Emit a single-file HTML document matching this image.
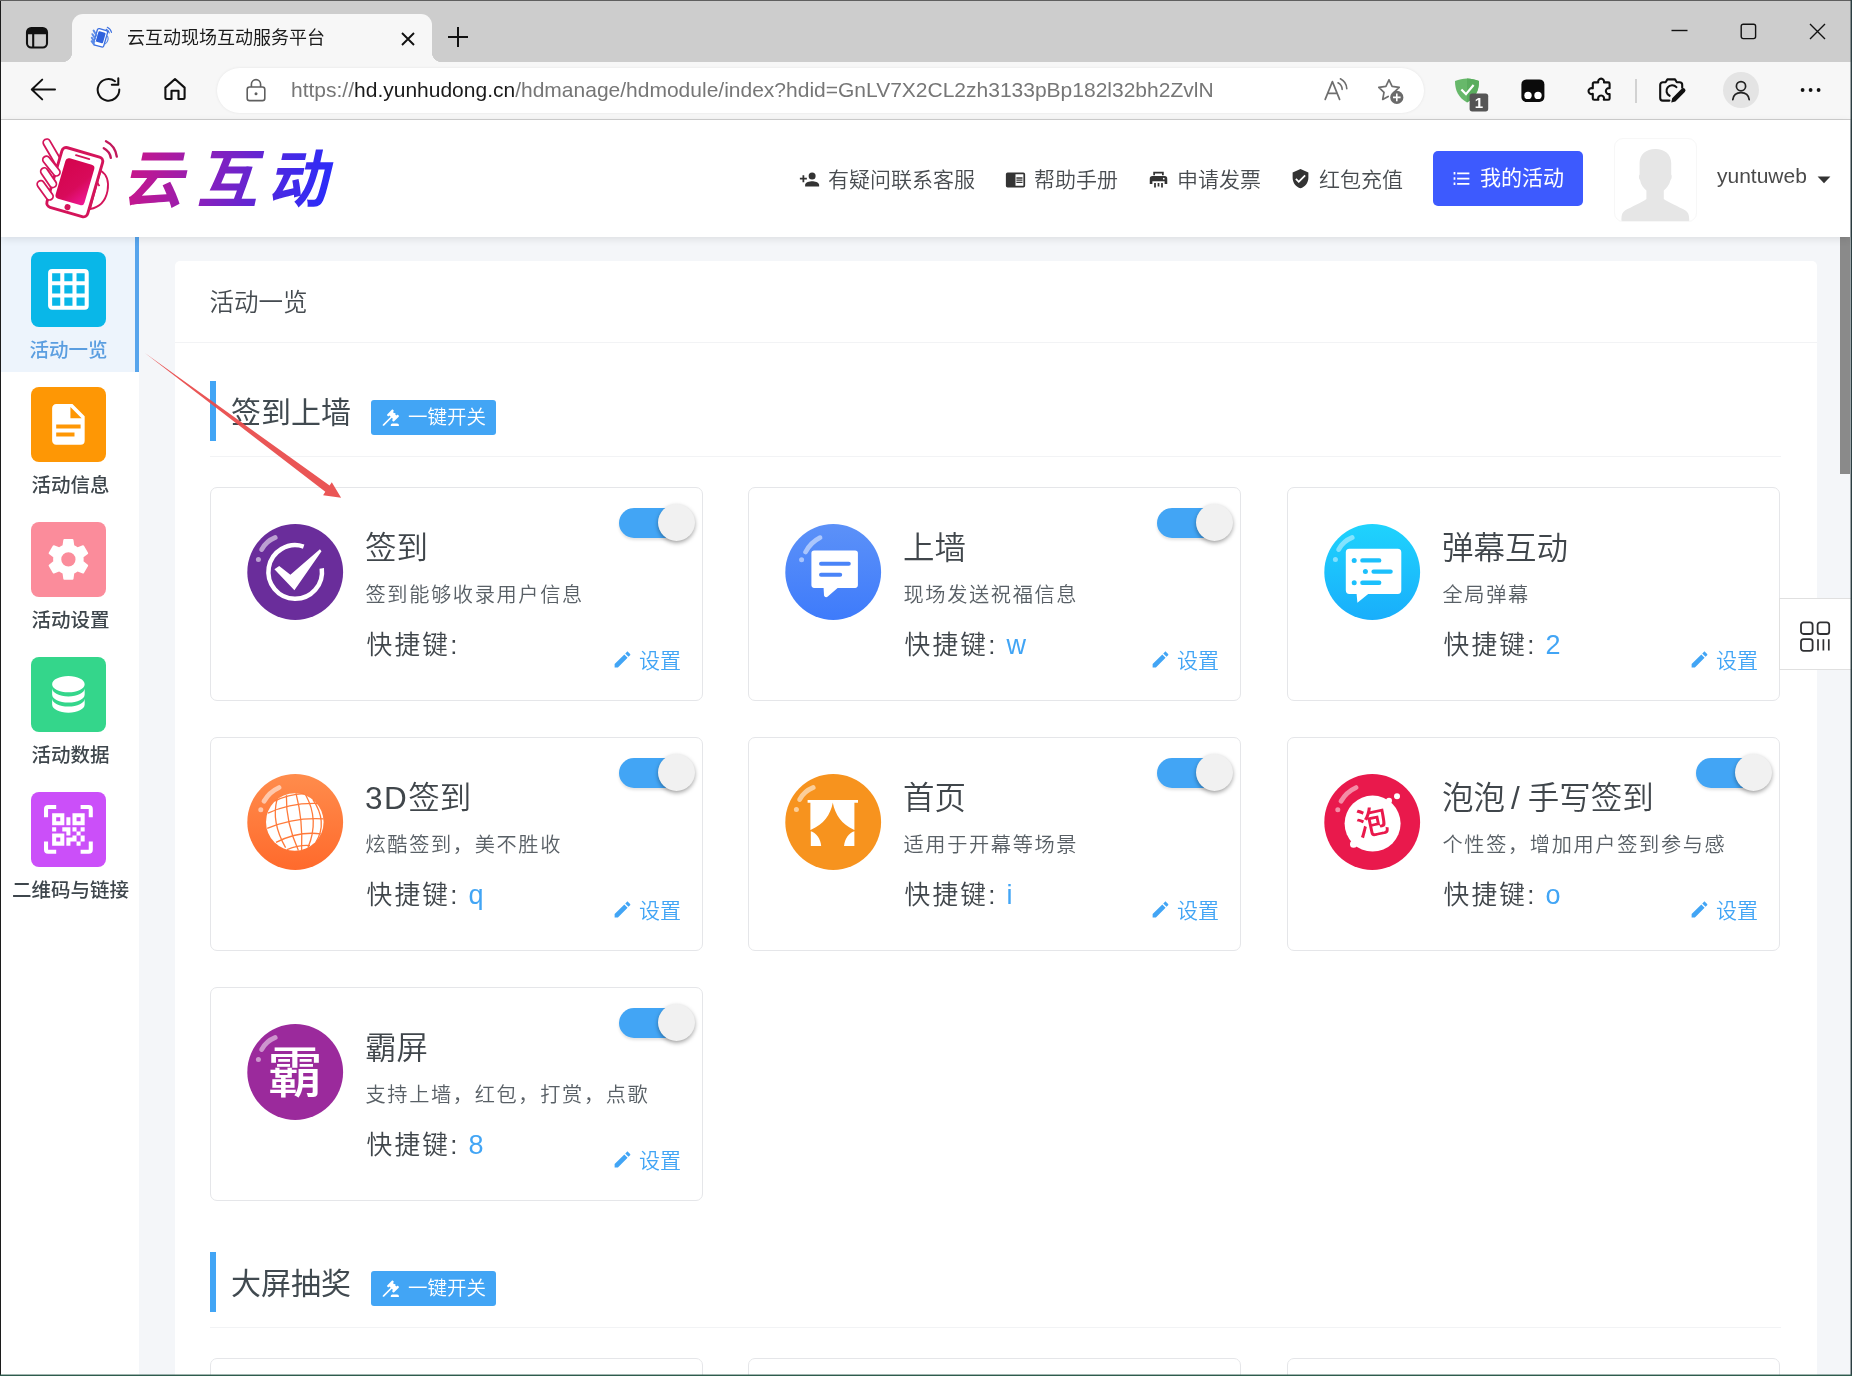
<!DOCTYPE html>
<html lang="zh-CN">
<head>
<meta charset="utf-8">
<title>云互动现场互动服务平台</title>
<style>
*{box-sizing:border-box;margin:0;padding:0}
html,body{width:1852px;height:1376px;overflow:hidden}
body{position:relative;background:#f4f6f9;font-family:"Liberation Sans","Noto Sans CJK SC",sans-serif;color:#455a64;-webkit-font-smoothing:antialiased}
.abs{position:absolute}
svg{display:block;position:absolute;overflow:visible}
/* ---------- browser chrome ---------- */
#tabstrip{left:0;top:0;width:1852px;height:62px;background:#cdcdcd}
#tab{left:72px;top:14px;width:360px;height:48px;background:#f7f7f7;border-radius:11px 11px 0 0}
#tab:before,#tab:after{content:"";position:absolute;bottom:0;width:10px;height:10px}
#tab:before{left:-10px;background:radial-gradient(circle at 0 0,rgba(247,247,247,0) 10px,#f7f7f7 10.5px)}
#tab:after{right:-10px;background:radial-gradient(circle at 100% 0,rgba(247,247,247,0) 10px,#f7f7f7 10.5px)}
#tabtitle{left:127px;top:24px;font-size:18px;line-height:28px;color:#1b1b1b;white-space:nowrap;font-weight:400}
#toolbar{left:0;top:62px;width:1852px;height:58px;background:#f7f7f7;border-bottom:1px solid #cfcfcf}
#urlbar{left:217px;top:68px;width:1207px;height:45px;border-radius:23px;background:#fff;box-shadow:0 0 3px rgba(0,0,0,.08)}
#url{left:291px;top:75px;font-size:21px;line-height:30px;color:#767676;white-space:nowrap;letter-spacing:0}
#url b{font-weight:400;color:#1a1a1a}
#wl{left:0;top:0;width:1px;height:1376px;background:#1c1c1c}
#wt{left:0;top:0;width:1852px;height:1px;background:#5f5f5f}
#wr{left:1850px;top:0;width:2px;height:1376px;background:linear-gradient(90deg,rgba(44,62,66,.45) 50%,#2c3e42 50%)}
#wb{left:0;top:1374px;width:1852px;height:2px;background:linear-gradient(180deg,rgba(47,92,78,.45) 50%,#2f5c4e 50%)}
/* ---------- page ---------- */
#header{left:1px;top:120px;width:1849px;height:117px;background:#fff;box-shadow:0 2px 8px rgba(0,0,0,.10);z-index:5}
#sidebar{left:1px;top:237px;width:138px;height:1139px;background:#fff}
#sideact{left:1px;top:237px;width:138px;height:135px;background:#edf4fc}
#sidebar-bar{left:135px;top:237px;width:4px;height:135px;background:#56a4ec}
.sico{left:31px;width:75px;height:75px;border-radius:8px}
.slab{left:2px;width:137px;text-align:center;font-size:19.5px;line-height:26px;color:#3e464c;white-space:nowrap;font-weight:500}
#panel{left:175px;top:261px;width:1642px;height:1200px;background:#fff;border-radius:5px}
#ptitle{left:209.5px;top:284.500px;font-size:24.5px;line-height:36px;font-weight:350;color:#454b50;white-space:nowrap}
.hline{height:1px;background:#f2f3f5}
.secbar{left:210px;width:6px;height:60px;background:#42a5f5}
.sectitle{left:231px;font-size:30px;line-height:44px;font-weight:400;color:#414a50;white-space:nowrap}
.secbtn{left:371px;width:125px;height:35px;background:#42a5f5;border-radius:3px;color:#fff}
.secbtn span{position:absolute;left:37px;top:4px;font-size:19.5px;line-height:26px;font-weight:350;white-space:nowrap}
/* cards */
.card{width:493px;height:214px;background:#fff;border:1px solid #e5e6e9;border-radius:7px}
.c1{left:210px}.c2{left:748px}.c3{left:1287px}
.r1{top:487px}.r2{top:737px}.r3{top:987px}.r4{top:1358px}
.card .ic{left:36px;top:35px;width:96px;height:96px}
.card h3{position:absolute;left:154px;top:38px;font-size:31.5px;line-height:44px;font-weight:350;color:#40464b;white-space:nowrap}
.card p{position:absolute;left:154.5px;top:90.5px;font-size:20.2px;letter-spacing:1.65px;line-height:32px;font-weight:350;color:#596066;white-space:nowrap}
.card .sk{position:absolute;left:155.5px;top:137px;font-size:25.7px;letter-spacing:2.2px;line-height:40px;font-weight:350;color:#40464b;white-space:nowrap}
.card .sk i{font-style:normal;color:#42a5f5;margin-left:9px;font-size:27px;letter-spacing:0}
.card h3 u{text-decoration:none;margin:0 8px 0 6px}
.card h3 b{font-weight:350;letter-spacing:1.5px}
.card .set{position:absolute;left:428px;top:157.5px;font-size:21px;line-height:30px;font-weight:350;color:#42a5f5;white-space:nowrap}
.card .pen{left:401px;top:161px;width:21px;height:21px}
.tg{position:absolute;left:408px;top:20px;width:72px;height:30px;border-radius:15px;background:#42a5f5;box-shadow:0 2px 3px rgba(0,0,0,.12)}
.tg:after{content:"";position:absolute;left:39px;top:-4px;width:37px;height:37px;border-radius:50%;background:#f1f1f1;box-shadow:0 2px 4px rgba(0,0,0,.35)}
/* header items */
.hl{top:165px;font-size:21px;line-height:30px;font-weight:350;color:#484c50;white-space:nowrap}
#mybtn{left:1433px;top:151px;width:150px;height:55px;border-radius:5px;background:#3d5afe}
#mybtn span{position:absolute;left:47px;top:12px;font-size:21px;line-height:30px;color:#fff;font-weight:400;white-space:nowrap}
#uname{left:1717px;top:161px;font-size:21px;line-height:30px;color:#4a4a4a;white-space:nowrap}
#avatar{left:1614px;top:138px;width:83px;height:84px;border-radius:9px;border:1px solid #f7f7f7;overflow:hidden;background:#fff}
#scroll{left:1840px;top:237px;width:10px;height:237px;background:#8a8a8a}
#fbtn{left:1779px;top:598px;width:72px;height:72px;background:#fff;border:1px solid #e0e0e0;border-right:0}
</style>
</head>
<body>
<div id="root" class="abs" style="left:0;top:0;width:1852px;height:1376px;will-change:transform">
<!-- BROWSER CHROME -->
<div id="tabstrip" class="abs"></div>
<div id="tab" class="abs"></div>
<div id="tabtitle" class="abs">云互动现场互动服务平台</div>
<div id="toolbar" class="abs"></div>
<div id="urlbar" class="abs"></div>
<div id="url" class="abs">https://<b>hd.yunhudong.cn</b>/hdmanage/hdmodule/index?hdid=GnLV7X2CL2zh3133pBp182l32bh2ZvlN</div>
<!-- tab actions -->
<svg style="left:25px;top:26px" width="24" height="24" viewBox="0 0 24 24"><rect x="2" y="2" width="20" height="19.5" rx="4.2" fill="none" stroke="#111" stroke-width="2.1"/><path d="M2.5 8.2V6a3.7 3.7 0 0 1 3.7-3.7h11.6A3.7 3.7 0 0 1 21.5 6v2.2z" fill="#111"/><path d="M8.2 8v13" stroke="#111" stroke-width="2.1"/></svg>
<!-- favicon -->
<svg style="left:88px;top:25px" width="25" height="25" viewBox="0 0 25 25"><g transform="rotate(16 12 13)"><rect x="7.2" y="4.2" width="10.6" height="17" rx="1.8" fill="#fff" stroke="#3b6fe0" stroke-width="1.3"/><rect x="8.8" y="6.6" width="7.4" height="11" rx="1" fill="#2f62dd"/></g><path d="M5.6 5.5l3 5M4.4 9.2l2.8 4.2M3.8 12.8l2.6 3.8M3.6 16.2l2.6 3.4" stroke="#5b8be8" stroke-width="2" stroke-linecap="round" fill="none"/><path d="M18.6 10.5c2.2 1.5 2.4 5.6-1.6 8.4" stroke="#5b8be8" stroke-width="1.2" fill="none"/><path d="M18.2 4.3c1.6.7 2.6 1.9 3 3.6M19.3 2.2c2.3 1 3.7 2.8 4.2 5.2" stroke="#3b6fe0" stroke-width="1.1" fill="none" stroke-linecap="round"/></svg>
<!-- tab close -->
<svg style="left:401px;top:32px" width="14" height="14" viewBox="0 0 14 14"><path d="M1 1l12 12M13 1L1 13" stroke="#111" stroke-width="1.9" fill="none"/></svg>
<!-- new tab -->
<svg style="left:447px;top:26px" width="22" height="22" viewBox="0 0 22 22"><path d="M11 1v20M1 11h20" stroke="#111" stroke-width="2" fill="none"/></svg>
<!-- window controls -->
<svg style="left:1671px;top:29px" width="17" height="3" viewBox="0 0 17 3"><path d="M.5 1.5h16" stroke="#111" stroke-width="1.4"/></svg>
<svg style="left:1740px;top:23px" width="17" height="17" viewBox="0 0 17 17"><rect x="1.2" y="1.2" width="14.4" height="14.4" rx="2" fill="none" stroke="#111" stroke-width="1.4"/></svg>
<svg style="left:1809px;top:23px" width="17" height="17" viewBox="0 0 17 17"><path d="M1 1l15 15M16 1L1 16" stroke="#111" stroke-width="1.4" fill="none"/></svg>
<!-- back -->
<svg style="left:30px;top:78px" width="26" height="23" viewBox="0 0 26 23"><path d="M12.2 1.6L1.8 11.5l10.4 9.9M2 11.5h23" stroke="#111" stroke-width="2" fill="none" stroke-linecap="round" stroke-linejoin="round"/></svg>
<!-- refresh -->
<svg style="left:96px;top:77px" width="26" height="26" viewBox="0 0 26 26"><path d="M23.3 12.6A10.8 10.8 0 1 1 19 4.2" stroke="#111" stroke-width="2" fill="none" stroke-linecap="round"/><path d="M22.3 1.3v6.5h-6.5" stroke="#111" stroke-width="2" fill="none" stroke-linecap="round" stroke-linejoin="round"/></svg>
<!-- home -->
<svg style="left:163px;top:77px" width="24" height="24" viewBox="0 0 24 24"><path d="M2.4 10.6L12 2l9.6 8.6v10.2a1.2 1.2 0 0 1-1.2 1.2h-4.9v-8.2H8.5V22H3.6a1.2 1.2 0 0 1-1.2-1.2z" stroke="#111" stroke-width="2.1" fill="none" stroke-linejoin="round"/></svg>
<!-- lock -->
<svg style="left:246px;top:78px" width="20" height="24" viewBox="0 0 20 24"><rect x="1.2" y="9" width="17.6" height="13.6" rx="2.4" fill="none" stroke="#5f5f5f" stroke-width="1.6"/><path d="M5.4 9V6.2a4.6 4.6 0 0 1 9.2 0V9" fill="none" stroke="#5f5f5f" stroke-width="1.6"/><circle cx="10" cy="15.8" r="1.5" fill="#5f5f5f"/></svg>
<!-- read aloud -->
<svg style="left:1324px;top:77px" width="26" height="24" viewBox="0 0 26 24"><path d="M1.2 22.4L8.4 4.6l7.2 17.8M3.7 16.4h9.4" stroke="#6e6e6e" stroke-width="1.7" fill="none" stroke-linejoin="round" stroke-linecap="round"/><path d="M14 5.8c2.6 1.3 4 3.6 4.2 6.6M16.4 1.8c4 2 6.2 5.600 6.400 10" stroke="#6e6e6e" stroke-width="1.6" fill="none" stroke-linecap="round"/></svg>
<!-- star add -->
<svg style="left:1377px;top:78px" width="28" height="27" viewBox="0 0 28 27"><path d="M12 1.8l3.100 6.500 7.100 1-5.200 5-.2 1.200M12 1.800l-3.100 6.500-7.100 1 5.200 5-1.300 7.100 5.500-3" stroke="#6e6e6e" stroke-width="1.7" fill="none" stroke-linejoin="round" stroke-linecap="round"/><circle cx="19.800" cy="19.400" r="6.600" fill="#6a6a6a"/><path d="M19.800 15.600v7.600M16 19.400h7.600" stroke="#fff" stroke-width="1.600"/></svg>
<!-- adguard shield -->
<svg style="left:1454px;top:77px" width="36" height="36" viewBox="0 0 36 36"><path d="M13 1.400c4 0 8 .8 12 2.600 0 9.400-3.400 16.800-12 21.400C4.400 20.800 1 13.400 1 4 5 2.200 9 1.400 13 1.400z" fill="#67b86a"/><path d="M13 1.400c4 0 8 .8 12 2.600 0 9.400-3.400 16.800-12 21.400z" fill="#5aad5e"/><path d="M7.400 12.400l4.600 4.800 7.600-9.200" stroke="#fff" stroke-width="2.200" fill="none"/><rect x="15.600" y="16.600" width="18.600" height="17.800" rx="2.600" fill="#555"/></svg>
<div class="abs" style="left:1470px;top:94px;width:18px;height:18px;line-height:18px;text-align:center;color:#fff;font-size:15px;font-weight:700">1</div>
<!-- tampermonkey -->
<svg style="left:1521px;top:79px" width="24" height="24" viewBox="0 0 24 24"><rect x=".4" y=".4" width="23" height="22.600" rx="5" fill="#0b0b0b"/><circle cx="7" cy="16.400" r="3.700" fill="#fff"/><circle cx="17" cy="16.400" r="3.700" fill="#fff"/></svg>
<!-- puzzle -->
<svg style="left:1589px;top:77px" width="25" height="26" viewBox="0 0 25 26"><path d="M9.200 5.400a3 3 0 1 1 5.800 0h4.200a1.400 1.400 0 0 1 1.400 1.400v4.400a3 3 0 1 0 0 5.800v4.400a1.400 1.400 0 0 1-1.400 1.400h-4.400a3 3 0 1 0-5.400 0H5.200a1.400 1.400 0 0 1-1.400-1.400v-4.600a3 3 0 1 1 0-5.400V6.800a1.400 1.400 0 0 1 1.400-1.400z" fill="none" stroke="#111" stroke-width="2.100" stroke-linejoin="round"/></svg>
<div class="abs" style="left:1635px;top:79px;width:2px;height:24px;background:#d2d2d2"></div>
<!-- camera / web capture -->
<svg style="left:1658px;top:76px" width="28" height="28" viewBox="0 0 28 28"><path d="M11.400 24.600H4.800a2.600 2.600 0 0 1-2.600-2.600V8.800a2.600 2.600 0 0 1 2.600-2.600h2.800l1.800-2.800h7.600l1.800 2.800h2.800a2.600 2.600 0 0 1 2.600 2.600v3" fill="none" stroke="#111" stroke-width="2.100" stroke-linejoin="round" stroke-linecap="round"/><path d="M18.400 11.200a5.600 5.600 0 1 0-6.800 8.600" fill="none" stroke="#111" stroke-width="2.100" stroke-linecap="round"/><path d="M13.200 26.400l1-4.200 9.400-9.400a2.200 2.200 0 0 1 3.200 3.200l-9.400 9.400z" fill="#111"/></svg>
<!-- profile -->
<div class="abs" style="left:1723px;top:72px;width:36px;height:36px;border-radius:50%;background:#e4e4e4"></div>
<svg style="left:1731px;top:80px" width="20" height="21" viewBox="0 0 20 21"><circle cx="10" cy="6.200" r="4.600" fill="none" stroke="#222" stroke-width="1.700"/><path d="M1.800 19.600c.6-4.600 3.800-7 8.200-7s7.600 2.400 8.200 7" fill="none" stroke="#222" stroke-width="1.700" stroke-linecap="round"/></svg>
<!-- dots -->
<svg style="left:1800px;top:87px" width="22" height="6" viewBox="0 0 22 6"><circle cx="2.600" cy="3" r="1.900" fill="#111"/><circle cx="10.600" cy="3" r="1.900" fill="#111"/><circle cx="18.600" cy="3" r="1.900" fill="#111"/></svg>


<!-- PAGE -->
<div id="sidebar" class="abs"></div>
<div id="sideact" class="abs"></div>
<div id="sidebar-bar" class="abs"></div>
<!--B:SIDEBAR-ITEMS-->
<div class="abs sico" style="top:252px;background:#09b7e8"><svg style="left:13.100px;top:13.100px" width="48.800" height="48.800" viewBox="0 0 24 24"><path fill="#fff" d="M10,4V8H14V4H10M16,4V8H20V4H16M16,10V14H20V10H16M16,16V20H20V16H16M14,20V16H10V20H14M8,20V16H4V20H8M8,14V10H4V14H8M8,8V4H4V8H8M10,14H14V10H10V14M4,2H20A2,2 0 0,1 22,4V20A2,2 0 0,1 20,22H4C2.920,22 2,21.100 2,20V4A2,2 0 0,1 4,2Z"/></svg></div>
<div class="abs slab" style="top:337px;color:#5b9ee0;left:0">活动一览</div>
<div class="abs sico" style="top:387px;background:#fe9705"><svg style="left:13.100px;top:13.100px" width="48.800" height="48.800" viewBox="0 0 24 24"><path fill="#fff" d="M13,9H18.500L13,3.500V9M6,2H14L20,8V20A2,2 0 0,1 18,22H6C4.890,22 4,21.100 4,20V4C4,2.890 4.890,2 6,2M15,18V16H6V18H15M18,14V12H6V14H18Z"/></svg></div>
<div class="abs slab" style="top:472px">活动信息</div>
<div class="abs sico" style="top:522px;background:#fb8c9b"><svg style="left:13.100px;top:13.100px" width="48.800" height="48.800" viewBox="0 0 24 24"><path fill="#fff" d="M12,15.500A3.500,3.500 0 0,1 8.500,12A3.500,3.500 0 0,1 12,8.500A3.500,3.500 0 0,1 15.500,12A3.500,3.500 0 0,1 12,15.500M19.430,12.970C19.470,12.650 19.500,12.330 19.500,12C19.500,11.670 19.470,11.340 19.430,11L21.540,9.370C21.730,9.220 21.780,8.950 21.660,8.730L19.660,5.270C19.540,5.050 19.270,4.960 19.050,5.050L16.560,6.050C16.040,5.660 15.500,5.320 14.870,5.070L14.500,2.420C14.460,2.180 14.250,2 14,2H10C9.750,2 9.540,2.180 9.500,2.420L9.130,5.070C8.500,5.320 7.960,5.660 7.440,6.050L4.950,5.050C4.730,4.960 4.460,5.050 4.340,5.270L2.340,8.730C2.210,8.950 2.270,9.220 2.460,9.370L4.570,11C4.530,11.340 4.500,11.670 4.500,12C4.500,12.330 4.530,12.650 4.570,12.970L2.460,14.630C2.270,14.780 2.210,15.050 2.340,15.270L4.340,18.730C4.460,18.950 4.730,19.030 4.950,18.950L7.440,17.940C7.960,18.340 8.500,18.680 9.130,18.930L9.500,21.580C9.540,21.820 9.750,22 10,22H14C14.250,22 14.460,21.820 14.500,21.580L14.870,18.930C15.500,18.670 16.040,18.340 16.560,17.940L19.050,18.950C19.270,19.030 19.540,18.950 19.660,18.730L21.660,15.270C21.780,15.050 21.730,14.780 21.540,14.630L19.430,12.970Z"/></svg></div>
<div class="abs slab" style="top:607px">活动设置</div>
<div class="abs sico" style="top:657px;background:#34d68b"><svg style="left:13.100px;top:13.100px" width="48.800" height="48.800" viewBox="0 0 24 24"><path fill="#fff" d="M12,3C7.580,3 4,4.790 4,7C4,9.210 7.580,11 12,11C16.420,11 20,9.210 20,7C20,4.790 16.420,3 12,3M4,9V12C4,14.210 7.580,16 12,16C16.420,16 20,14.210 20,12V9C20,11.210 16.420,13 12,13C7.580,13 4,11.210 4,9M4,14V17C4,19.210 7.580,21 12,21C16.420,21 20,19.210 20,17V14C20,16.210 16.420,18 12,18C7.580,18 4,16.210 4,14Z"/></svg></div>
<div class="abs slab" style="top:742px">活动数据</div>
<div class="abs sico" style="top:792px;background:#cb4ff9"><svg style="left:13.100px;top:13.100px" width="48.800" height="48.800" viewBox="0 0 24 24"><path fill="#fff" d="M4,4H10V10H4V4M20,4V10H14V4H20M14,15H16V13H14V11H16V13H18V11H20V13H18V15H20V18H18V20H16V18H13V20H11V16H14V15M16,15V18H18V15H16M4,20V14H10V20H4M6,6V8H8V6H6M16,6V8H18V6H16M6,16V18H8V16H6M4,11H6V13H4V11M9,11H13V15H11V13H9V11M11,6H13V10H11V6M2,2V6H0V2A2,2 0 0,1 2,0H6V2H2M22,0A2,2 0 0,1 24,2V6H22V2H18V0H22M2,18V22H6V24H2A2,2 0 0,1 0,22V18H2M22,22V18H24V22A2,2 0 0,1 22,24H18V22H22Z"/></svg></div>
<div class="abs slab" style="top:877px">二维码与链接</div>
<!--E:SIDEBAR-ITEMS-->
<div id="panel" class="abs"></div>
<div id="ptitle" class="abs">活动一览</div>
<div class="abs hline" style="left:175px;top:342px;width:1642px"></div>
<!--B:SECTION1-->
<div class="abs secbar" style="top:381px"></div><div class="abs sectitle" style="top:391px">签到上墙</div><div class="abs secbtn" style="top:400px"><svg style="left:10px;top:8px" width="19.500" height="19.500" viewBox="0 0 24 24"><path fill="#fff" d="M2.300,20.280L11.900,10.680L10.500,9.260L9.780,9.970C9.390,10.360 8.760,10.360 8.370,9.970L7.660,9.260C7.270,8.870 7.270,8.240 7.660,7.850L13.320,2.190C13.710,1.800 14.340,1.800 14.730,2.190L15.440,2.900C15.830,3.290 15.830,3.920 15.440,4.310L14.730,5L16.150,6.430C16.540,6.040 17.170,6.040 17.560,6.430C17.950,6.820 17.950,7.460 17.560,7.850L18.970,9.260L19.680,8.550C20.070,8.160 20.710,8.160 21.100,8.550L21.800,9.260C22.190,9.650 22.190,10.290 21.800,10.680L16.150,16.330C15.760,16.720 15.120,16.720 14.730,16.330L14.030,15.630C13.630,15.240 13.630,14.600 14.030,14.210L14.730,13.500L13.320,12.090L3.710,21.700C3.320,22.090 2.690,22.090 2.300,21.700C1.910,21.310 1.910,20.670 2.300,20.280M20,19A2,2 0 0,1 22,21V22H12V21A2,2 0 0,1 14,19H20Z"/></svg><span>一键开关</span></div><div class="abs hline" style="left:210px;top:456px;width:1571px"></div>
<!--E:SECTION1-->
<!--B:CARDS-->
<div class="abs card c1 r1"><svg class="icn" style="left:29px;top:28px" width="110" height="110" viewBox="0 0 110 110"><circle cx="55.200" cy="56" r="47.900" fill="#6a2d9b"/><path d="M21.6 33.6Q26.2 25.2 35.2 21.6" stroke="#fff" stroke-opacity="0.55" stroke-width="4.800" stroke-linecap="round" fill="none"/><circle cx="18.4" cy="43.6" r="2.500" fill="#fff" fill-opacity="0.55"/><path d="M81.750 52.360A26.800 26.800 0 1 1 63.660 30.570" fill="none" stroke="#fff" stroke-width="4.500"/><path d="M34.400 53.200L39.200 50 50.400 58.800 79.900 33.200 81.500 35.200 54.400 74.300z" fill="#fff"/></svg><h3>签到</h3><p>签到能够收录用户信息</p><div class="sk">快捷键:<i></i></div><div class="tg"></div><svg class="pen" viewBox="0 0 24 24"><path fill="#42a5f5" d="M20.710,7.040C21.100,6.650 21.100,6 20.710,5.630L18.370,3.290C18,2.900 17.350,2.900 16.960,3.290L15.120,5.120L18.870,8.870M3,17.250V21H6.750L17.810,9.930L14.060,6.180L3,17.250Z"/></svg><div class="set">设置</div></div>
<div class="abs card c2 r1"><svg class="icn" style="left:29px;top:28px" width="110" height="110" viewBox="0 0 110 110"><defs><linearGradient id="g_sq" x1="0" y1="0" x2="0" y2="1"><stop offset="0" stop-color="#5c91f8"/><stop offset="1" stop-color="#3e7bfb"/></linearGradient></defs><circle cx="55.200" cy="56" r="47.900" fill="url(#g_sq)"/><path d="M27.6 36Q32.6 26.5 42 21.7" stroke="#fff" stroke-opacity="0.5" stroke-width="4.800" stroke-linecap="round" fill="none"/><circle cx="23.6" cy="43.8" r="2.500" fill="#fff" fill-opacity="0.5"/><path d="M36.200 34.400h40.900a2.800 2.800 0 0 1 2.800 2.800v31.900a2.800 2.800 0 0 1-2.800 2.800H59.600L49.800 80.600c-1.600 1.300-3.800.4-3.800-1.600l-.4-7.100H36.200a2.800 2.800 0 0 1-2.800-2.800V37.200a2.800 2.800 0 0 1 2.800-2.800z" fill="#fff"/><path d="M43 47.800h27.800M43 58.800h19.200" stroke="#4a84f8" stroke-width="4" stroke-linecap="round"/></svg><h3>上墙</h3><p>现场发送祝福信息</p><div class="sk">快捷键:<i>w</i></div><div class="tg"></div><svg class="pen" viewBox="0 0 24 24"><path fill="#42a5f5" d="M20.710,7.040C21.100,6.650 21.100,6 20.710,5.630L18.370,3.290C18,2.900 17.350,2.900 16.960,3.290L15.120,5.120L18.870,8.870M3,17.250V21H6.750L17.810,9.930L14.060,6.180L3,17.250Z"/></svg><div class="set">设置</div></div>
<div class="abs card c3 r1"><svg class="icn" style="left:29px;top:28px" width="110" height="110" viewBox="0 0 110 110"><defs><linearGradient id="g_dm" x1="0" y1="0" x2="0" y2="1"><stop offset="0" stop-color="#1fd3fd"/><stop offset="1" stop-color="#19aefb"/></linearGradient></defs><circle cx="55.200" cy="56" r="47.900" fill="url(#g_dm)"/><path d="M21.6 33.6Q26.2 25.2 35.2 21.6" stroke="#fff" stroke-opacity="0.45" stroke-width="4.800" stroke-linecap="round" fill="none"/><circle cx="18.4" cy="43.6" r="2.500" fill="#fff" fill-opacity="0.45"/><path d="M32.400 32.800h48.300a3.600 3.600 0 0 1 3.600 3.600v37.900a3.600 3.600 0 0 1-3.600 3.600H51.200L40.400 86.700l-.8-8.800h-7.200a3.600 3.600 0 0 1-3.600-3.600V36.400a3.600 3.600 0 0 1 3.600-3.600z" fill="#fff"/><g stroke="#1cc0fc" stroke-width="4.400" stroke-linecap="round"><path d="M45.400 44.400h16.800M56.600 55.600h17M45.400 66.700h16.800"/></g><g fill="#1cc0fc"><circle cx="37.200" cy="44.400" r="2.500"/><circle cx="48.400" cy="55.600" r="2.500"/><circle cx="37.200" cy="66.700" r="2.500"/></g></svg><h3>弹幕互动</h3><p>全局弹幕</p><div class="sk">快捷键:<i>2</i></div><svg class="pen" viewBox="0 0 24 24"><path fill="#42a5f5" d="M20.710,7.040C21.100,6.650 21.100,6 20.710,5.630L18.370,3.290C18,2.900 17.350,2.900 16.960,3.290L15.120,5.120L18.870,8.870M3,17.250V21H6.750L17.810,9.930L14.060,6.180L3,17.250Z"/></svg><div class="set">设置</div></div>
<div class="abs card c1 r2"><svg class="icn" style="left:29px;top:28px" width="110" height="110" viewBox="0 0 110 110"><defs><linearGradient id="g_3d" x1="0" y1="0" x2="0" y2="1"><stop offset="0" stop-color="#ff8c4c"/><stop offset="1" stop-color="#ff6a2c"/></linearGradient></defs><circle cx="55.200" cy="56" r="47.900" fill="url(#g_3d)"/><path d="M24 35.2Q29.3 26.0 39 21.6" stroke="#fff" stroke-opacity="0.55" stroke-width="4.800" stroke-linecap="round" fill="none"/><circle cx="20.8" cy="43.8" r="2.500" fill="#fff" fill-opacity="0.55"/><circle cx="54.800" cy="56" r="28.800" fill="#fff"/><g fill="none" stroke="#ff7a3a" stroke-width="1.300"><path d="M34.400 35.200Q48 28.400 64 27.600"/><path d="M28 47.200Q50 36.600 77.600 37.400"/><path d="M27.200 62.400Q54 51 83.400 52.800"/><path d="M36 76.400Q58 65 80.800 67.800"/><path d="M47 83.600Q60 78.600 70 79.600"/><path d="M37 33.600Q31 56 45.600 81.600"/><path d="M46.400 29.200Q45.600 56 58.400 84.400"/><path d="M56 27.400Q63 54 61.600 84.400"/><path d="M65.600 28.800Q79.600 54 68 81.600"/><path d="M73 33.600Q88 56 76 76"/></g></svg><h3><b>3D</b>签到</h3><p>炫酷签到，美不胜收</p><div class="sk">快捷键:<i>q</i></div><div class="tg"></div><svg class="pen" viewBox="0 0 24 24"><path fill="#42a5f5" d="M20.710,7.040C21.100,6.650 21.100,6 20.710,5.630L18.370,3.290C18,2.900 17.350,2.900 16.960,3.290L15.120,5.120L18.870,8.870M3,17.250V21H6.750L17.810,9.930L14.060,6.180L3,17.250Z"/></svg><div class="set">设置</div></div>
<div class="abs card c2 r2"><svg class="icn" style="left:29px;top:28px" width="110" height="110" viewBox="0 0 110 110"><circle cx="55.200" cy="56" r="47.900" fill="#f7931e"/><path d="M21.6 33.6Q26.2 25.2 35.2 21.6" stroke="#fff" stroke-opacity="0.55" stroke-width="4.800" stroke-linecap="round" fill="none"/><circle cx="18.4" cy="43.6" r="2.500" fill="#fff" fill-opacity="0.55"/><path d="M29.600 34h50.400v2.800H29.600z" fill="#fff"/><path d="M32.400 35.600h22.400v1.200C52.400 49 45.600 58.400 33.500 63.500L32.400 64z" fill="#fff"/><path d="M32.800 65.200C38.400 66.800 42.400 72.400 43.200 80H32.800z" fill="#fff"/><path d="M76.400 35.600H54.800v1.200C57.200 49 64 58.400 75.300 63.500L76.400 64z" fill="#fff"/><path d="M76.400 65.200C70.800 66.800 66.800 72.400 66 80h10.400z" fill="#fff"/></svg><h3>首页</h3><p>适用于开幕等场景</p><div class="sk">快捷键:<i>i</i></div><div class="tg"></div><svg class="pen" viewBox="0 0 24 24"><path fill="#42a5f5" d="M20.710,7.040C21.100,6.650 21.100,6 20.710,5.630L18.370,3.290C18,2.900 17.350,2.900 16.960,3.290L15.120,5.120L18.870,8.870M3,17.250V21H6.750L17.810,9.930L14.060,6.180L3,17.250Z"/></svg><div class="set">设置</div></div>
<div class="abs card c3 r2"><svg class="icn" style="left:29px;top:28px" width="110" height="110" viewBox="0 0 110 110"><circle cx="55.200" cy="56" r="47.900" fill="#e9194c"/><path d="M24 35.2Q29.3 26.0 39 21.6" stroke="#fff" stroke-opacity="0.5" stroke-width="4.800" stroke-linecap="round" fill="none"/><circle cx="20.8" cy="43.8" r="2.500" fill="#fff" fill-opacity="0.5"/><circle cx="55.600" cy="57.600" r="28" fill="#fff"/><circle cx="72" cy="34.800" r="3" fill="#fff"/><circle cx="36.600" cy="78.200" r="3.600" fill="#fff"/><circle cx="80" cy="30.200" r="3" fill="#fff"/><text x="55.600" y="68" text-anchor="middle" font-family="'Liberation Sans','Noto Sans CJK SC',sans-serif" font-size="32" font-weight="500" fill="#e9194c" transform="rotate(-12 55.600 57.600)">泡</text></svg><h3>泡泡<u>/</u>手写签到</h3><p>个性签，增加用户签到参与感</p><div class="sk">快捷键:<i>o</i></div><div class="tg"></div><svg class="pen" viewBox="0 0 24 24"><path fill="#42a5f5" d="M20.710,7.040C21.100,6.650 21.100,6 20.710,5.630L18.370,3.290C18,2.900 17.350,2.900 16.960,3.290L15.120,5.120L18.870,8.870M3,17.250V21H6.750L17.810,9.930L14.060,6.180L3,17.250Z"/></svg><div class="set">设置</div></div>
<div class="abs card c1 r3"><svg class="icn" style="left:29px;top:28px" width="110" height="110" viewBox="0 0 110 110"><circle cx="55.200" cy="56" r="47.900" fill="#9b2a9c"/><path d="M21.6 33.6Q26.2 25.2 35.2 21.6" stroke="#fff" stroke-opacity="0.5" stroke-width="4.800" stroke-linecap="round" fill="none"/><circle cx="18.4" cy="43.6" r="2.500" fill="#fff" fill-opacity="0.5"/><text x="55" y="76.200" text-anchor="middle" font-family="'Liberation Sans','Noto Sans CJK SC',sans-serif" font-size="55" font-weight="500" fill="#fff">霸</text></svg><h3>霸屏</h3><p>支持上墙，红包，打赏，点歌</p><div class="sk">快捷键:<i>8</i></div><div class="tg"></div><svg class="pen" viewBox="0 0 24 24"><path fill="#42a5f5" d="M20.710,7.040C21.100,6.650 21.100,6 20.710,5.630L18.370,3.290C18,2.900 17.350,2.900 16.960,3.290L15.120,5.120L18.870,8.870M3,17.250V21H6.750L17.810,9.930L14.060,6.180L3,17.250Z"/></svg><div class="set">设置</div></div>
<div class="abs card c1 r4"></div>
<div class="abs card c2 r4"></div>
<div class="abs card c3 r4"></div>
<!--E:CARDS-->
<!--B:SECTION2-->
<div class="abs secbar" style="top:1252px"></div><div class="abs sectitle" style="top:1262px">大屏抽奖</div><div class="abs secbtn" style="top:1271px"><svg style="left:10px;top:8px" width="19.500" height="19.500" viewBox="0 0 24 24"><path fill="#fff" d="M2.300,20.280L11.900,10.680L10.500,9.260L9.780,9.970C9.390,10.360 8.760,10.360 8.370,9.970L7.660,9.260C7.270,8.870 7.270,8.240 7.660,7.850L13.320,2.190C13.710,1.800 14.340,1.800 14.730,2.190L15.440,2.900C15.830,3.290 15.830,3.920 15.440,4.310L14.730,5L16.150,6.430C16.540,6.040 17.170,6.040 17.560,6.430C17.950,6.820 17.950,7.460 17.560,7.850L18.970,9.260L19.680,8.550C20.070,8.160 20.710,8.160 21.100,8.550L21.800,9.260C22.190,9.650 22.190,10.290 21.800,10.680L16.150,16.330C15.760,16.720 15.120,16.720 14.730,16.330L14.030,15.630C13.630,15.240 13.630,14.600 14.030,14.210L14.730,13.500L13.320,12.090L3.710,21.700C3.320,22.090 2.690,22.090 2.300,21.700C1.910,21.310 1.910,20.670 2.300,20.280M20,19A2,2 0 0,1 22,21V22H12V21A2,2 0 0,1 14,19H20Z"/></svg><span>一键开关</span></div><div class="abs hline" style="left:210px;top:1327px;width:1571px"></div>
<!--E:SECTION2-->
<div id="header" class="abs"></div>
<!-- logo -->
<svg id="logo" style="left:25px;top:130px;z-index:6" width="110" height="100" viewBox="0 0 110 100">
<defs><linearGradient id="lgs" x1="0" y1="0" x2="1" y2="1"><stop offset="0" stop-color="#d4044c"/><stop offset=".6" stop-color="#d80a5a"/><stop offset="1" stop-color="#f0189a"/></linearGradient></defs>
<g stroke-linecap="round" fill="none"><path d="M21.800 12.700L33.100 32" stroke="#d4145a" stroke-width="9"/><path d="M21.800 12.700L33.100 32" stroke="#fff" stroke-width="5.400"/></g>
<path d="M75.500 40.500c5.500 3.500 9 10 7 20.500-2 10-8.500 16.500-17.500 18z" fill="#fff" stroke="#d4145a" stroke-width="1.800"/>
<path d="M75.500 40.500c-4 3.500-5.500 7-3.500 11 .8 1.800 1.600 3.200 2.400 4.600" fill="none" stroke="#d4145a" stroke-width="1.700"/>
<g transform="translate(49.800 52.200) rotate(16.300)">
<rect x="-21.200" y="-31" width="42.400" height="62" rx="4.500" fill="#fff" stroke="#d4145a" stroke-width="2.900"/>
<rect x="-15" y="-21.500" width="30" height="42" rx="3.600" fill="url(#lgs)"/>
<path d="M-6.500 -26.300h14" stroke="#d4145a" stroke-width="1.700" stroke-linecap="round"/>
<circle cx="0" cy="26" r="3" fill="#d4145a"/>
</g>
<g stroke-linecap="round" fill="none"><path d="M21.400 29.800L31.400 42.300" stroke="#d4145a" stroke-width="9"/><path d="M21.400 29.800L31.400 42.300" stroke="#fff" stroke-width="5.400"/><path d="M19.300 41.400L27.800 53.900" stroke="#d4145a" stroke-width="9"/><path d="M19.300 41.400L27.800 53.900" stroke="#fff" stroke-width="5.400"/><path d="M15.800 54.300L24.500 66.300" stroke="#d4145a" stroke-width="9"/><path d="M15.800 54.300L24.500 66.300" stroke="#fff" stroke-width="5.400"/></g>
<path d="M78.800 18.200c4 2.200 6.400 5.400 7 9.600M81 11.200c6 3 9.800 8.200 10.800 15.400" fill="none" stroke="#c2185b" stroke-width="2.400" stroke-linecap="round"/>
</svg>
<svg id="logotext" style="left:115px;top:140px;z-index:6" width="230" height="80" viewBox="0 0 230 80">
<defs><linearGradient id="lgt" gradientUnits="userSpaceOnUse" x1="12" y1="0" x2="222" y2="0"><stop offset="0" stop-color="#c8168a"/><stop offset=".5" stop-color="#7a22c6"/><stop offset="1" stop-color="#2a2cfa"/></linearGradient></defs>
<defs><linearGradient id="lg1" x1="0" y1="0" x2="1" y2="0"><stop offset="0" stop-color="#c8168a"/><stop offset="1" stop-color="#9a1eae"/></linearGradient><linearGradient id="lg2" x1="0" y1="0" x2="1" y2="0"><stop offset="0" stop-color="#8c20ba"/><stop offset="1" stop-color="#5c26d6"/></linearGradient><linearGradient id="lg3" x1="0" y1="0" x2="1" y2="0"><stop offset="0" stop-color="#4e28e0"/><stop offset="1" stop-color="#2a2cfa"/></linearGradient></defs><g font-family="'Liberation Sans','Noto Sans CJK SC',sans-serif" font-weight="700" font-size="63"><text fill="url(#lg1)" transform="translate(7.500 61.500) skewX(-12) scale(.970 1)">云</text><text fill="url(#lg2)" transform="translate(81.500 61.500) skewX(-12) scale(.970 1)">互</text><text fill="url(#lg3)" transform="translate(152.500 61.500) skewX(-12) scale(.960 1)">动</text></g>
</svg>
<!-- nav -->
<svg style="left:799px;top:169px;z-index:6" width="21" height="21" viewBox="0 0 24 24"><path fill="#333" d="M15,14C12.330,14 7,15.330 7,18V20H23V18C23,15.330 17.670,14 15,14M6,10V7H4V10H1V12H4V15H6V12H9V10M15,12A4,4 0 0,0 19,8A4,4 0 0,0 15,4A4,4 0 0,0 11,8A4,4 0 0,0 15,12Z"/></svg>
<div class="abs hl" style="left:828px;z-index:6">有疑问联系客服</div>
<svg style="left:1005px;top:169px;z-index:6" width="21" height="21" viewBox="0 0 24 24"><path fill="#333" d="M13,12H20V13.500H13M13,9.500H20V11H13M13,14.500H20V16H13M21,4H3A2,2 0 0,0 1,6V19A2,2 0 0,0 3,21H21A2,2 0 0,0 23,19V6A2,2 0 0,0 21,4M21,19H12V6H21"/></svg>
<div class="abs hl" style="left:1034px;z-index:6">帮助手册</div>
<svg style="left:1148px;top:169px;z-index:6" width="21" height="21" viewBox="0 0 24 24"><path fill="#333" d="M6,3V7H8V5H16V7H18V3H6M5,8A3,3 0 0,0 2,11V17H5V14H19V17H22V11A3,3 0 0,0 19,8H5M18,10A1,1 0 0,1 19,11A1,1 0 0,1 18,12A1,1 0 0,1 17,11A1,1 0 0,1 18,10M7,16V21H9V16H7M11,16V20H13V16H11M15,16V21H17V16H15Z"/></svg>
<div class="abs hl" style="left:1177px;z-index:6">申请发票</div>
<svg style="left:1290px;top:168px;z-index:6" width="21" height="21" viewBox="0 0 24 24"><path fill="#333" d="M10,17L6,13L7.410,11.590L10,14.170L16.590,7.580L18,9M12,1L3,5V11C3,16.550 6.840,21.740 12,23C17.160,21.740 21,16.550 21,11V5L12,1Z"/></svg>
<div class="abs hl" style="left:1319px;z-index:6">红包充值</div>
<div id="mybtn" class="abs" style="z-index:6">
<svg style="left:18px;top:17px" width="21" height="21" viewBox="0 0 24 24"><path fill="#fff" d="M7,5H21V7H7V5M7,13V11H21V13H7M7,19V17H21V19H7M3,4.500H5V7.500H3M3,10.500H5V13.500H3M3,16.500H5V19.500H3"/></svg>
<span>我的活动</span></div>
<div id="avatar" class="abs" style="z-index:6"><svg style="left:0;top:0" width="83" height="84" viewBox="0 0 83 84"><path fill="#e6e6e6" d="M40.400 10C31 10 24.600 15.500 24.600 24V35.500C23.600 36.500 23.600 39.500 25 41 26 46 28.500 49 31.400 51.500V60C28 63 16 68 10 71.500 7.500 73 6.400 76 6.400 80V82H74.200V80C74.200 76 73 73 70.500 71.500 64.500 68 52.500 63 48.800 60V51.500C51.700 49 54.200 46 55.600 41 57 39.500 57 36.500 56.200 35.500V24C56.200 15.500 49.800 10 40.400 10Z"/></svg></div>
<div id="uname" class="abs" style="z-index:6">yuntuweb</div>
<svg style="left:1817px;top:176px;z-index:6" width="14" height="8" viewBox="0 0 14 8"><path d="M.6.400h12.800L7 7.200z" fill="#333"/></svg>

<div id="scroll" class="abs"></div>
<div id="fbtn" class="abs"></div>
<svg style="left:1800px;top:621px" width="31" height="31" viewBox="0 0 31 31"><g fill="none" stroke="#2f3033" stroke-width="1.800"><rect x="1" y="1.400" width="11.600" height="11.600" rx="2.600"/><rect x="17.600" y="1.400" width="11.600" height="11.600" rx="2.600"/><rect x="1" y="18.200" width="11.600" height="11.600" rx="2.600"/><path d="M18 18.200v11.400M23.400 18.200v11.400M28.800 18.200v11.400" stroke-width="1.700"/></g></svg>
<svg style="left:0;top:0;z-index:9" width="1852" height="1376" viewBox="0 0 1852 1376"><path d="M144.900 353L329.600 485.600 331.800 482.200 341.100 497.700 323.100 495.200 325.300 491.800z" fill="#e94b4b" fill-opacity=".94"/></svg>

<div id="wl" class="abs"></div><div id="wt" class="abs"></div><div id="wr" class="abs"></div><div id="wb" class="abs"></div>
</div>
</body>
</html>
